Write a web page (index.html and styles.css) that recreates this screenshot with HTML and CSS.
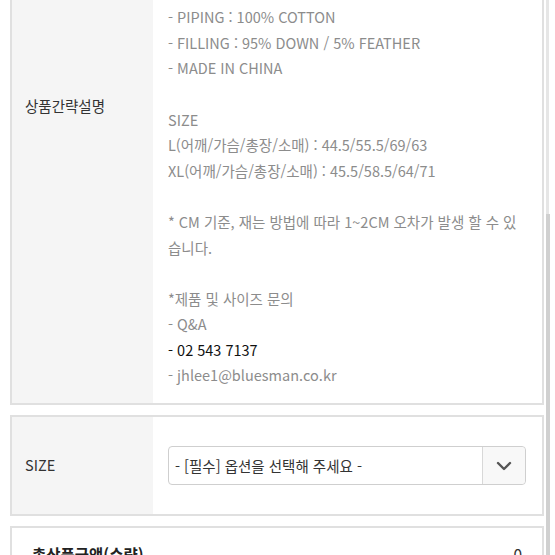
FILE: index.html
```html
<!DOCTYPE html>
<html lang="ko">
<head>
    <meta charset="UTF-8">
    <meta name="viewport" content="width=device-width, initial-scale=1.0">
    <title>상품 상세</title>
    <link rel="stylesheet" href="styles.css">
</head>
<body>
    <div class="product-info">
        <div class="info-row summary-row">
            <div class="info-label">상품간략설명</div>
            <div class="info-value">
                <p>BLUESMAN 덕다운 패딩 자켓</p>
                <p>&nbsp;</p>
                <p>COLOR : BLACK / NAVY</p>
                <p>&nbsp;</p>
                <p>FABRIC</p>
                <p>- SHELL : 100% NYLON</p>
                <p>- LINING : 100% NYLON</p>
                <p>- PIPING : 100% COTTON</p>
                <p>- FILLING : 95% DOWN / 5% FEATHER</p>
                <p>- MADE IN CHINA</p>
                <p>&nbsp;</p>
                <p>SIZE</p>
                <p>L(어깨/가슴/총장/소매) : 44.5/55.5/69/63</p>
                <p>XL(어깨/가슴/총장/소매) : 45.5/58.5/64/71</p>
                <p>&nbsp;</p>
                <p>* CM 기준, 재는 방법에 따라 1~2CM 오차가 발생 할 수 있습니다.</p>
                <p>&nbsp;</p>
                <p>*제품 및 사이즈 문의</p>
                <p>- Q&amp;A</p>
                <p class="phone">- 02 543 7137</p>
                <p>- jhlee1@bluesman.co.kr</p>
            </div>
        </div>

        <div class="info-row option-row">
            <div class="info-label">SIZE</div>
            <div class="info-value">
                <div class="option-select">
                    <span class="option-text">- [필수] 옵션을 선택해 주세요 -</span>
                    <span class="option-arrow">
                        <svg width="16" height="10" viewBox="0 0 16 10">
                            <path d="M2 2 L8 8 L14 2" fill="none" stroke="#555" stroke-width="2.4" stroke-linecap="round" stroke-linejoin="round"/>
                        </svg>
                    </span>
                </div>
            </div>
        </div>

        <div class="total-row">
            <span class="total-label">총상품금액(수량)</span>
            <span class="total-price">0</span>
        </div>
    </div>

    <div class="scroll-track"><div class="scroll-thumb"></div></div>
</body>
</html>
```

FILE: styles.css
```css
body {
    margin: 0;
    background-color: #ffffff;
    font-family: "Noto Sans CJK KR", "Noto Sans", sans-serif;
    font-size: 14.5px;
    color: #333;
}
.product-info {
    padding: 0 11px 0 10px;
}
.info-row {
    display: flex;
    border: 2px solid #e0e0e0;
    margin-bottom: 10px;
}
.summary-row {
    margin-top: -192px;
}
.info-label {
    width: 128px;
    flex-shrink: 0;
    background-color: #f5f5f5;
    padding-left: 13px;
    padding-bottom: 3px;
    display: flex;
    align-items: center;
    color: #333;
}
.info-value {
    flex: 1;
    padding: 15px 16px 15px 15px;
    color: #8c8c8c;
    line-height: 25.6px;
}
.info-value p {
    margin: 0;
}
.info-value .phone {
    color: #111;
}
.option-row .info-value {
    padding: 29px 16px 29px 15px;
}
.option-select {
    display: flex;
    height: 37px;
    border: 1px solid #cfcfcf;
    border-radius: 4px;
    background-color: #fff;
}
.option-text {
    flex: 1;
    padding-left: 6px;
    line-height: 37px;
    color: #333;
}
.option-arrow {
    width: 42px;
    border-left: 1px solid #d8d8d8;
    background-color: #f8f8f8;
    border-radius: 0 4px 4px 0;
    display: flex;
    align-items: center;
    justify-content: center;
}
.total-row {
    display: flex;
    justify-content: space-between;
    border: 2px solid #e0e0e0;
    padding: 16px 20px 15px 20px;
    font-size: 15.5px;
    line-height: 20px;
}
.total-label {
    font-weight: bold;
    color: #222;
}
.scroll-track {
    position: fixed;
    top: 0;
    right: 6px;
    width: 3px;
    height: 100%;
    background-color: #e6e6e6;
}
.scroll-thumb {
    margin-top: 214px;
    width: 4px;
    height: 341px;
    background-color: #d0d0d0;
}
```
